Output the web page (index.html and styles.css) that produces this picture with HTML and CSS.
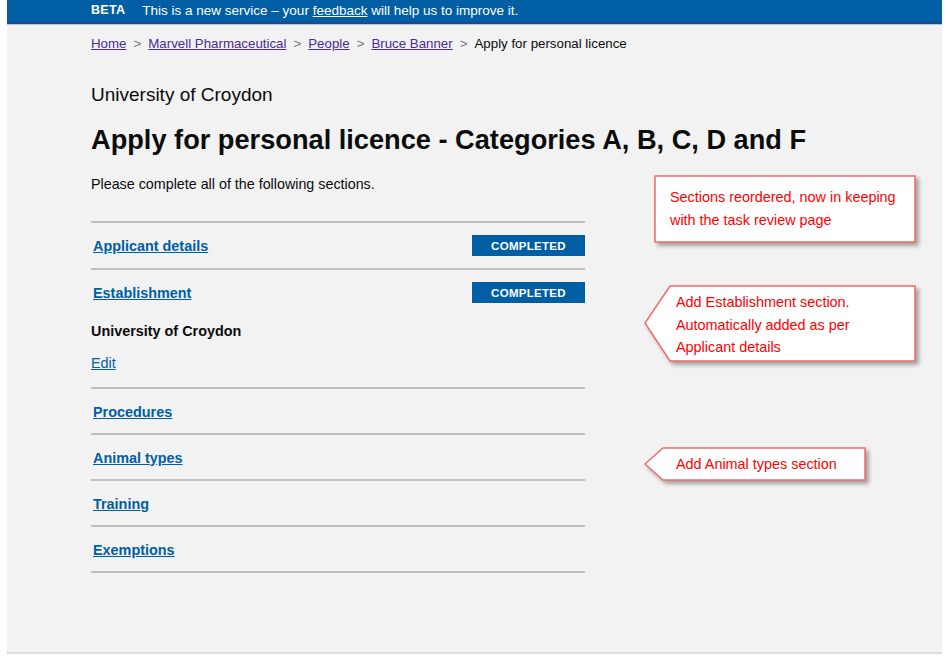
FILE: index.html
```html
<!DOCTYPE html>
<html lang="en">
<head>
<meta charset="utf-8">
<title>Apply for personal licence</title>
<link rel="stylesheet" href="styles.css">
</head>
<body>
<div class="frame">
  <div class="phase">
    <strong class="phase-tag">BETA</strong>
    <span class="phase-text">This is a new service – your <a href="#">feedback</a> will help us to improve it.</span>
  </div>
  <div class="container">
    <nav class="breadcrumbs">
      <a href="#">Home</a><span class="sep">&gt;</span><a href="#">Marvell Pharmaceutical</a><span class="sep">&gt;</span><a href="#">People</a><span class="sep">&gt;</span><a href="#">Bruce Banner</a><span class="sep">&gt;</span><span class="current">Apply for personal licence</span>
    </nav>
    <p class="caption">University of Croydon</p>
    <h1 class="title">Apply for personal licence - Categories A, B, C, D and F</h1>
    <p class="lead">Please complete all of the following sections.</p>

    <ul class="tasks">
      <li class="task task-first">
        <div class="task-head"><a href="#" class="task-link">Applicant details</a><span class="badge">COMPLETED</span></div>
      </li>
      <li class="task">
        <div class="task-head"><a href="#" class="task-link">Establishment</a><span class="badge">COMPLETED</span></div>
        <p class="task-value">University of Croydon</p>
        <a href="#" class="edit-link">Edit</a>
      </li>
      <li class="task"><div class="task-head"><a href="#" class="task-link">Procedures</a></div></li>
      <li class="task"><div class="task-head"><a href="#" class="task-link">Animal types</a></div></li>
      <li class="task"><div class="task-head"><a href="#" class="task-link">Training</a></div></li>
      <li class="task"><div class="task-head"><a href="#" class="task-link">Exemptions</a></div></li>
    </ul>
  </div>

  <div class="note note-1">
    <svg class="note-shape" width="262" height="68" viewBox="0 0 262 68"><polygon points="1,1 261,1 261,67 1,67"/></svg>
    <div class="note-text">Sections reordered, now in keeping<br>with the task review page</div>
  </div>
  <div class="note note-2">
    <svg class="note-shape" width="272" height="77" viewBox="0 0 272 77"><polygon points="26,1 271,1 271,76 26,76 1,38"/></svg>
    <div class="note-text">Add Establishment section.<br>Automatically added as per<br>Applicant details</div>
  </div>
  <div class="note note-3">
    <svg class="note-shape" width="222" height="34" viewBox="0 0 222 34"><polygon points="19,1 221,1 221,33 19,33 1,17"/></svg>
    <div class="note-text">Add Animal types section</div>
  </div>
</div>
</body>
</html>
```

FILE: styles.css
```css
* { box-sizing: border-box; }
html, body { margin: 0; padding: 0; background: #ffffff; }
body { font-family: "Liberation Sans", Arial, sans-serif; color: #0b0c0c; }

.frame {
  position: relative;
  margin-left: 7px;
  width: 935px;
  height: 654px;
  background: #f2f2f2;
  border-bottom: 2px solid #dcdcdc;
}

.phase {
  height: 24px;
  background: #005ea5;
  border-bottom: 2px solid #1c4a86;
  box-shadow: 0 1px 0 #b5c8dc;
  color: #ffffff;
  font-size: 13.5px;
  line-height: 21px;
  padding-left: 84px;
  display: flex;
  gap: 17px;
}
.phase-tag { font-weight: 700; font-size: 12.5px; letter-spacing: 0.3px; }
.phase-text a { color: #ffffff; }

.container { padding-left: 84px; }

.breadcrumbs {
  margin-top: 12px;
  font-size: 13.3px;
  line-height: 16px;
  display: flex;
  align-items: center;
}
.breadcrumbs a { color: #4c2c92; }
.breadcrumbs .sep { color: #6f777b; margin: 0 7px; }
.breadcrumbs .current { color: #0b0c0c; }

.caption {
  margin: 32px 0 0;
  font-size: 19px;
  line-height: 22px;
}
.title {
  margin: 19px 0 0;
  font-size: 27.2px;
  line-height: 30px;
  font-weight: 700;
}
.lead {
  margin: 21px 0 0;
  font-size: 14.3px;
  line-height: 16px;
}

.tasks {
  list-style: none;
  margin: 29px 0 0;
  padding: 0;
  width: 494px;
  border-top: 2px solid #bfbfbf;
}
.task {
  border-bottom: 2px solid #bfbfbf;
  padding: 13px 0 12px;
}
.task-first { padding-bottom: 13px; }
.task-head {
  display: flex;
  justify-content: space-between;
  align-items: center;
  height: 19px;
}
.task-link {
  color: #005ea5;
  font-weight: 700;
  font-size: 14.4px;
  margin-left: 2px;
}
.badge {
  width: 113px;
  height: 21px;
  background: #005ea5;
  color: #ffffff;
  font-size: 11.5px;
  font-weight: 700;
  letter-spacing: 0.3px;
  display: flex;
  align-items: center;
  justify-content: center;
}
.task-value {
  margin: 20px 0 0;
  font-size: 14.4px;
  font-weight: 700;
  line-height: 18px;
}
.edit-link {
  display: inline-block;
  margin-top: 14px;
  margin-bottom: 3px;
  color: #005ea5;
  font-size: 14.4px;
  line-height: 18px;
}

.note { position: absolute; }
.note-shape { position: absolute; left: 0; top: 0; overflow: visible; filter: drop-shadow(3px 3px 2px rgba(0,0,0,0.35)); }
.note-shape polygon { fill: #ffffff; stroke: #f26b6b; stroke-width: 1.5; }
.note-text { position: relative; color: #ff0000; font-size: 14.4px; }

.note-1 { left: 647px; top: 175px; width: 262px; height: 68px; }
.note-1 .note-text { padding: 11px 0 0 16px; line-height: 23px; }
.note-2 { left: 637px; top: 285px; width: 272px; height: 77px; }
.note-2 .note-text { padding: 6px 0 0 32px; line-height: 22.5px; }
.note-3 { left: 637px; top: 447px; width: 222px; height: 34px; }
.note-3 .note-text { padding: 0 0 0 32px; line-height: 34px; }
```
